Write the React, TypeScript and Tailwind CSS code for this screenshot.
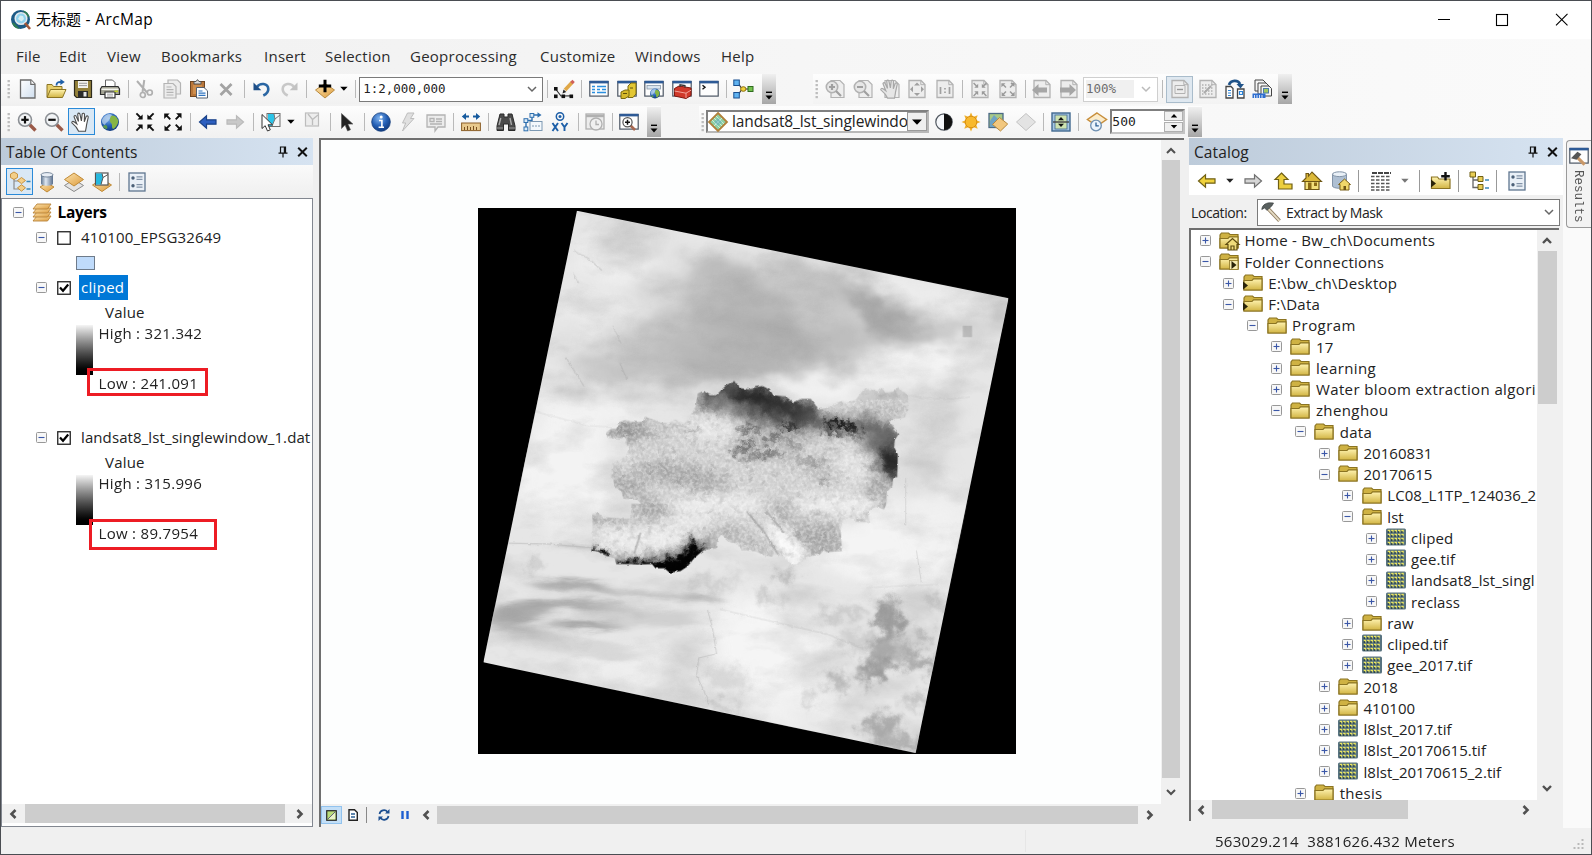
import React from "react";

type Kids = { children?: React.ReactNode };

const Ico = ({ children }: Kids) => (
  <svg viewBox="0 0 20 20" className="h-5 w-5 shrink-0 overflow-visible" fill="none">
    {children}
  </svg>
);

const Btn = ({ children, on }: Kids & { on?: boolean }) => (
  <div className="flex h-[30px] w-[27.4px] shrink-0 items-center justify-center">
    {on ? (
      <div className="flex h-[27px] w-[27px] shrink-0 items-center justify-center border border-[#2a8ad8] bg-[#d9e8f5]">{children}</div>
    ) : (
      children
    )}
  </div>
);

const Sep = () => (
  <div className="flex h-[30px] w-[8px] shrink-0 items-center justify-center">
    <div className="h-[18px] w-px bg-[#b9b9b9]" />
  </div>
);

const Grip = () => (
  <svg viewBox="0 0 4 20" className="h-5 w-1 shrink-0">
    {[1, 5, 9, 13, 17].map((y) => (
      <rect key={y} x="0.5" y={y} width="2.4" height="2.2" fill="#bdbdbd" />
    ))}
  </svg>
);

const Overflow = () => (
  <div className="flex h-[30px] w-[14px] shrink-0 items-end justify-center bg-gradient-to-b from-[#f0f0f0] to-[#a6a6a6] pb-[3px]">
    <svg viewBox="0 0 10 10" className="h-[10px] w-[10px]">
      <path d="M2 1.3h6" stroke="#000" strokeWidth="1.4" />
      <path d="M1.5 4.5h7L5 8.6z" fill="#000" />
    </svg>
  </div>
);

const Drop = ({ c = "#000" }: { c?: string }) => (
  <svg viewBox="0 0 12 6" className="h-[6px] w-[12px] shrink-0">
    <path d="M2.2 0.8h7.4L5.9 4.8z" fill={c} />
  </svg>
);

const Chevron = ({ dir, c = "#505050", s = 2 }: { dir: "l" | "r" | "u" | "d"; c?: string; s?: number }) => {
  const d = {
    l: "M7.5 2L3.5 6l4 4",
    r: "M4.5 2l4 4-4 4",
    u: "M2 8l4-4 4 4",
    d: "M2 4l4 4 4-4",
  }[dir];
  return (
    <svg viewBox="0 0 12 12" className="h-3 w-3 shrink-0" fill="none">
      <path d={d} stroke={c} strokeWidth={s} />
    </svg>
  );
};

const Defs = () => (
  <svg className="absolute h-0 w-0">
    <defs>
      <linearGradient id="gold" x1="0" y1="0" x2="0" y2="1">
        <stop offset="0" stopColor="#fff3b0" />
        <stop offset="1" stopColor="#d2b544" />
      </linearGradient>
      <linearGradient id="tan" x1="0" y1="0" x2="1" y2="1">
        <stop offset="0" stopColor="#fce3ae" />
        <stop offset="1" stopColor="#dd9c3e" />
      </linearGradient>
      <linearGradient id="paper" x1="0" y1="0" x2="1" y2="1">
        <stop offset="0" stopColor="#ffffff" />
        <stop offset="1" stopColor="#cfdeee" />
      </linearGradient>
      <linearGradient id="cyl" x1="0" y1="0" x2="1" y2="0">
        <stop offset="0" stopColor="#5e7590" />
        <stop offset="0.4" stopColor="#dfe8f2" />
        <stop offset="1" stopColor="#5a6f8c" />
      </linearGradient>
      <radialGradient id="blueball" cx="0.4" cy="0.3" r="0.7">
        <stop offset="0" stopColor="#7fb4f0" />
        <stop offset="0.6" stopColor="#245fb5" />
        <stop offset="1" stopColor="#123c80" />
      </radialGradient>
    </defs>
  </svg>
);

/* ---------- icons ---------- */
const NewDoc = () => (
  <Ico>
    <path d="M2.5 1h10.5l4 4v14h-14.5z" fill="url(#paper)" stroke="#6b6b6b" strokeWidth="1.3" />
    <path d="M12.8 1v4.4h4.2" fill="#fff" stroke="#6b6b6b" strokeWidth="1.2" />
  </Ico>
);
const Open = () => (
  <Ico>
    <path d="M1 18V5.500h5l1.500 2H16V18z" fill="#e7cf6c" stroke="#8b7422" />
    <path d="M1 18.500L4.500 10.500h15.500l-3.500 8z" fill="url(#gold)" stroke="#8b7422" />
    <path d="M10.500 6.500c0-3 1.500-3.500 4.500-3.500" stroke="#1d5fa8" strokeWidth="1.800" />
    <path d="M14.400 0l4.400 3-4.400 3z" fill="#1d5fa8" />
  </Ico>
);
const Save = () => (
  <Ico>
    <path d="M1.500 1.500h17v17h-15l-2-2z" fill="#94813a" stroke="#2e2b1d" strokeWidth="1.2" />
    <rect x="5" y="2" width="10" height="7" fill="#f2f2ee" />
    <path d="M6 4.300h8M6 6.600h8" stroke="#9a9a9a" />
    <rect x="5" y="12" width="10" height="6.400" fill="#2b2b2b" />
    <rect x="10.500" y="13" width="3" height="4.500" fill="#e8e8e8" />
  </Ico>
);
const Print = () => (
  <Ico>
    <path d="M5.500 8V1h7l2.500 2.500V8" fill="#fff" stroke="#666" />
    <path d="M2 7.500h16l1.500 2.500v5.500h-19V10z" fill="#a3a394" stroke="#2f2f2f" strokeWidth="1.200" />
    <path d="M1.500 10.300h17" stroke="#f5f5f0" strokeWidth="1.500" />
    <path d="M5 13h10v5.800H5z" fill="#fff" stroke="#333" strokeWidth="1.200" />
    <path d="M7 15.200h6M7 17h6" stroke="#888" strokeWidth="0.800" />
    <rect x="14.500" y="11.500" width="3.500" height="1.600" fill="#c4d32c" />
  </Ico>
);
const Cut = () => (
  <Ico>
    <path d="M3 2L13 13.500M10.300 1L8.500 13" stroke="#b0b0b0" strokeWidth="2" />
    <circle cx="8.800" cy="16" r="2.500" stroke="#b0b0b0" strokeWidth="1.700" />
    <circle cx="15.800" cy="13.500" r="2.500" stroke="#b0b0b0" strokeWidth="1.700" />
  </Ico>
);
const Copy = () => (
  <Ico>
    <path d="M6 1h9.500l3 3v11H6z" fill="#ececec" stroke="#b4b4b4" strokeWidth="1.200" />
    <path d="M2 4.500h9l3 3V19H2z" fill="#ececec" stroke="#b4b4b4" strokeWidth="1.200" />
    <path d="M4.500 8h5M4.500 10.700h7M4.500 13.300h7M4.500 16h7" stroke="#b4b4b4" strokeWidth="1.200" />
  </Ico>
);
const Paste = () => (
  <Ico>
    <rect x="1.500" y="2.500" width="14" height="15" fill="#b8763a" stroke="#6f4520" />
    <path d="M5 5V2.500h2L8.500.6 10 2.500h2V5z" fill="#d8d8d8" stroke="#555" />
    <rect x="4" y="6" width="9" height="9" fill="#cf8f4e" />
    <path d="M7.500 8.500h7.500l3.500 3.300V19H7.500z" fill="#fff" stroke="#55606e" />
    <path d="M9.500 12h4M9.500 14.200h7M9.500 16.400h7" stroke="#2f74c0" strokeWidth="1.200" />
  </Ico>
);
const Del = () => (
  <Ico>
    <path d="M4.500 5l11 11M15.500 5l-11 11" stroke="#a3a3a3" strokeWidth="2.800" />
  </Ico>
);
const Undo = () => (
  <Ico>
    <path d="M5 8c3-4.500 11-4 11.300 2 .1 3-1.800 5-5 6.500" stroke="#2a66a3" strokeWidth="2.600" />
    <path d="M1.500 3.500v7.800h7.800z" fill="#1f4f88" />
  </Ico>
);
const Redo = () => (
  <Ico>
    <path d="M15 8C12 3.500 4 4 3.700 10c-.1 3 1.800 5 5 6.500" stroke="#c8c8c8" strokeWidth="2.600" />
    <path d="M18.500 3.500v7.800h-7.800z" fill="#c2c2c2" />
  </Ico>
);
const AddData = () => (
  <Ico>
    <path d="M10 4.500L19.500 11 10 19 .5 11z" fill="url(#tan)" stroke="#b98a3e" />
    <path d="M10 .8v12.400M3.800 7h12.400" stroke="#000" strokeWidth="3" />
  </Ico>
);
const Editor = () => (
  <Ico>
    <path d="M2 10.500l5 6.500 10-.2" stroke="#333" strokeWidth="1.200" />
    <rect x="0" y="8" width="3.600" height="3.600" fill="#111" />
    <rect x="0" y="15.500" width="3.600" height="3.600" fill="#111" />
    <rect x="7.500" y="15.500" width="3.600" height="3.600" fill="#111" />
    <rect x="15.500" y="15.500" width="3.600" height="3.600" fill="#111" />
    <path d="M11 11L18 3.500" stroke="#e0a848" strokeWidth="3.600" />
    <path d="M17.300 1.800l2.500 2.400" stroke="#d0605a" strokeWidth="3" />
    <path d="M8.500 14.500l1-4 2.800 2.600z" fill="#222" />
  </Ico>
);
const WinFrame = ({ children }: Kids) => (
  <Ico>
    <rect x="0.800" y="2.500" width="18.400" height="14.600" fill="#fdfdfd" stroke="#4b5563" strokeWidth="1.200" />
    <rect x="0.500" y="1.800" width="19" height="2.600" fill="#2d5a96" />
    {children}
  </Ico>
);
const WToc = () => (
  <WinFrame>
    <path d="M3 7.500h3M3 10.500h3M3 13.500h3M8 7.500h9M8 10.500h3M8 13.500h9M13 10.500h4" stroke="#2a8fe0" strokeWidth="1.500" />
  </WinFrame>
);
const WCat = () => (
  <WinFrame>
    <path d="M11 7l3-3h5v11l-3 3.500h-5z" fill="#e3c733" stroke="#7b6a12" />
    <path d="M4 13l4-2h4v6l-4 2.500H4z" fill="#d6b92b" stroke="#7b6a12" />
    <path d="M6 14.500h4M13 9h3" stroke="#5e500a" />
  </WinFrame>
);
const Globe = ({ x = 10, y = 10, r = 9 }: { x?: number; y?: number; r?: number }) => (
  <g transform={`translate(${x} ${y}) scale(${r / 9})`}>
    <circle r="9" fill="url(#blueball)" />
    <path d="M-7-4C-4-8 0-9 2-7 1-4 0-4-1-2-2 0-4 0-5 3-8 2-9-1-7-4z" fill="#c3d8ee" opacity="0.700" />
    <path d="M1-6C4-8 8-4 8.300-1 8 2 6 6 3 7 1 5 3 3 1 1-1-1 0-4 1-6z" fill="#86b544" />
    <path d="M-5 3c2 0 3 2 2 4-2 0-4-1-4-3z" fill="#5a9850" />
  </g>
);
const WSearch = () => (
  <WinFrame>
    <rect x="3" y="6.500" width="13.500" height="3.500" fill="#dbe6f0" stroke="#8797a8" strokeWidth="0.800" />
    <Globe x={11} y={14.500} r={5} />
  </WinFrame>
);
const WBox = () => (
  <WinFrame>
    <path d="M2.500 9.500L7 7l12 2v7.500L14 19.500 2.500 17z" fill="#d0392b" stroke="#80180f" />
    <path d="M2.500 12L14 14.200l5-3M14 14v5" stroke="#f3a39a" />
    <path d="M8 8V5.800l5 .8V8.500" stroke="#333" strokeWidth="1.200" />
  </WinFrame>
);
const WPy = () => (
  <WinFrame>
    <path d="M3.500 6.200L6 8.200l-2.500 2" stroke="#111" strokeWidth="1.400" />
  </WinFrame>
);
const Model = () => (
  <Ico>
    <path d="M5 4l4 6M5 16l4-6M9 10h8" stroke="#333" strokeWidth="1.200" />
    <rect x="0.800" y="1" width="5.500" height="5.500" fill="#5fb2f0" stroke="#184f90" />
    <rect x="0.800" y="13.500" width="5.500" height="5.500" fill="#5fb2f0" stroke="#184f90" />
    <ellipse cx="10.300" cy="10" rx="2.700" ry="2.300" fill="#f2d23a" stroke="#8a6d10" />
    <rect x="15" y="7.500" width="5" height="5" fill="#74c24f" stroke="#2f6b1e" />
  </Ico>
);
const Lens = ({ plus }: { plus?: boolean }) => (
  <Ico>
    <path d="M12 12l6.500 6.500" stroke="#9b5a48" strokeWidth="3.400" />
    <circle cx="8" cy="7.800" r="6.500" fill="#f2f4f6" stroke="#8b8f94" strokeWidth="1.600" />
    <path d="M4.300 7.800h7.400" stroke="#111" strokeWidth="2.200" />
    {plus && <path d="M8 4.100v7.400" stroke="#111" strokeWidth="2.200" />}
  </Ico>
);
const handD = "M7.600 19.200C6 15 3.500 13 .8 10.800c-.3-1.600 1.400-1.700 2.600-.8l2.400 1.800L3 4.700c.2-1.500 1.700-1.500 2.200-.3l2.300 5L6.700 2.200c.5-1.500 2-1.300 2.300.1l1.400 6.600.8-7c.9-1.200 2.200-.7 2.300.6l-.2 7.200 1.900-5.300c1-1 2.200-.3 2 1l-1.700 7.800c-.2 2.200-.7 3.600-1 6z";
const Hand = () => (
  <Ico>
    <path d={handD} fill="#fff" stroke="#4d4d4d" strokeWidth="1.100" />
  </Ico>
);
const Arrows = ({ out, c = "#111" }: { out?: boolean; c?: string }) => (
  <g>
    {[0, 90, 180, 270].map((a) => (
      <g key={a} transform={`rotate(${a} 10 10)`}>
        {out ? (
          <g>
            <path d="M1.200 1.500h5.400L1.200 6.900z" fill={c} />
            <path d="M3 3l4.300 4.300" stroke={c} strokeWidth="1.900" />
          </g>
        ) : (
          <g>
            <path d="M7.600 7.600H2.400L7.600 2.400z" fill={c} />
            <path d="M6 6L1.400 1.400" stroke={c} strokeWidth="1.900" />
          </g>
        )}
      </g>
    ))}
  </g>
);
const ArrowLR = ({ right, fill, stroke }: { right?: boolean; fill: string; stroke: string }) => (
  <Ico>
    <path
      d="M1.500 10L8.500 3.800v4H18v4.400H8.500v4z"
      fill={fill}
      stroke={stroke}
      strokeWidth="1.200"
      transform={right ? "translate(20 0) scale(-1 1)" : undefined}
    />
  </Ico>
);
const SelFeat = () => (
  <Ico>
    <rect x="6" y="1.500" width="13" height="13" fill="#f5f5f5" stroke="#6e6e6e" />
    <path d="M7 2h6l1 5-3 7H7z" fill="#2cc4e8" />
    <path d="M13 2l1 5 5-4M14 7l-3 7" stroke="#777" />
    <path d="M1 2.500v14l3.200-2.800L6.500 19l2.800-1.200-2.300-5h4.500z" fill="#fff" stroke="#333" />
  </Ico>
);
const ClearSel = () => (
  <Ico>
    <rect x="2.500" y="1" width="13" height="13" fill="#ededed" stroke="#bdbdbd" strokeWidth="1.200" />
    <path d="M5 2l4.500 5.500L15 3M9.500 7.500V13" stroke="#bdbdbd" strokeWidth="1.300" />
  </Ico>
);
const Cursor = () => (
  <Ico>
    <path d="M4.500 1.500v15l3.600-3.400 2.500 5.900 2.900-1.300-2.600-5.600h5z" fill="#222" stroke="#555" strokeWidth="0.600" />
  </Ico>
);
const Info = () => (
  <Ico>
    <circle cx="10" cy="10" r="9.300" fill="url(#blueball)" stroke="#16407f" strokeWidth="0.800" />
    <circle cx="10.200" cy="5" r="1.500" fill="#fff" />
    <path d="M8 8.500h2.900v6.500M7.600 15.300h5.400" stroke="#fff" strokeWidth="1.600" />
  </Ico>
);
const Bolt = () => (
  <Ico>
    <path d="M9.500 1h6.500l-3.500 5.500H16L4.500 19l3.200-8H4.500z" fill="#e0e0e0" stroke="#bdbdbd" />
  </Ico>
);
const Popup = () => (
  <Ico>
    <path d="M1 3h18v12h-7l-3 4v-4H1z" fill="#ececec" stroke="#b3b3b3" strokeWidth="1.300" />
    <path d="M4 6.500h4v3H4zM10 7h6M10 9.500h6M4 12h12" stroke="#b3b3b3" strokeWidth="1.300" />
  </Ico>
);
const Measure = () => (
  <Ico>
    <path d="M3 4.500h5M12 4.500h5" stroke="#165a9e" strokeWidth="1.800" />
    <path d="M5 1v7L.8 4.500zM15 1v7l4.200-3.500z" fill="#165a9e" />
    <rect x="0.600" y="11" width="18.800" height="7.600" fill="#e8c98d" stroke="#8b5f28" />
    <path d="M3.500 18v-3M6.500 18v-4M9.500 18v-3M12.500 18v-4M15.500 18v-3" stroke="#7a5020" />
  </Ico>
);
const Binoc = () => (
  <Ico>
    <path d="M4 2h4v3h4V2h4l3 12v4.500h-6.500V12h-5v6.500H1V14z" fill="#4a4a4a" stroke="#2a2a2a" />
    <path d="M4.800 6L3 13M14 6l1.500 7" stroke="#aaa" strokeWidth="1.400" />
    <path d="M1 16h6M13 16h6" stroke="#999" strokeWidth="1.200" />
  </Ico>
);
const Route = () => (
  <Ico>
    <path d="M3 16.500V8.500h6V3h8" stroke="#2e6fae" strokeWidth="1.400" />
    <path d="M14.500.2L18.500 3l-4 2.800z" fill="#2e6fae" />
    <rect x="1" y="6.700" width="3.800" height="3.800" fill="#dcecf8" stroke="#2e6fae" />
    <rect x="1" y="15" width="3.800" height="3.800" fill="#dcecf8" stroke="#2e6fae" />
    <rect x="7" y="1.500" width="3.800" height="3.800" fill="#dcecf8" stroke="#2e6fae" />
    <rect x="7" y="9.500" width="12" height="9" fill="#f3f8fc" stroke="#7c98b2" />
    <path d="M9 14h8" stroke="#7c98b2" strokeDasharray="2 1" />
  </Ico>
);
const GoXY = () => (
  <Ico>
    <circle cx="10" cy="4.500" r="3.700" stroke="#1d5fa8" strokeWidth="1.500" />
    <circle cx="10" cy="4.500" r="1.500" fill="#1d5fa8" />
    <path d="M2.500 11l5.500 8M8 11l-5.500 8M11.500 11l3 4.200L17.500 11M14.500 15v4" stroke="#1d5fa8" strokeWidth="1.900" />
  </Ico>
);
const TimeS = () => (
  <Ico>
    <rect x="1" y="2" width="18" height="15" fill="#ececec" stroke="#b0b0b0" strokeWidth="1.300" />
    <path d="M1 4h18" stroke="#b0b0b0" strokeWidth="2.400" />
    <circle cx="11" cy="12" r="6" fill="#f0f0f0" stroke="#b0b0b0" strokeWidth="1.300" />
    <path d="M11 8.500v4h3" stroke="#b0b0b0" strokeWidth="1.300" />
  </Ico>
);
const Viewer = () => (
  <WinFrame>
    <path d="M11 13l5 5" stroke="#a8674f" strokeWidth="2.600" />
    <circle cx="8.500" cy="10.300" r="4.600" fill="#fff" stroke="#555" strokeWidth="1.200" />
    <path d="M6 10.300h5M8.500 7.800v5" stroke="#111" strokeWidth="1.500" />
  </WinFrame>
);
const G = "#b2b2b2";
const GPage = ({ children }: Kids) => (
  <Ico>
    <path d="M2 1.500h12l4 4V18.500H2z" fill="#ededed" stroke={G} strokeWidth="1.300" />
    <path d="M13.800 1.500v4.200H18" stroke={G} />
    {children}
  </Ico>
);
const GLens = ({ plus }: { plus?: boolean }) => (
  <Ico>
    <path d="M6 1.500h9l4 4V18.500H6z" fill="#eeeeee" stroke={G} strokeWidth="1.200" />
    <circle cx="7" cy="8" r="5.700" fill="#e6e6e6" stroke={G} strokeWidth="1.600" />
    <path d="M4 8h6M11 12l5 5" stroke="#a0a0a0" strokeWidth="2.200" />
    {plus && <path d="M7 5v6" stroke="#a0a0a0" strokeWidth="2.200" />}
  </Ico>
);
const GHand = () => (
  <Ico>
    <path d="M5 1.500h10l4 4V18.500H5z" fill="#eeeeee" stroke={G} strokeWidth="1.200" />
    <path d={handD} fill="#e6e6e6" stroke="#a8a8a8" strokeWidth="1.200" />
  </Ico>
);
const Swap = () => (
  <Ico>
    <path d="M4 6C6 .8 13 .8 15 5" stroke="#1f5288" strokeWidth="2.800" />
    <path d="M11.500 5h7.500l-3.500 4.500z" fill="#1f5288" />
    <path d="M1 7.500h5l2 2V19H1zM12.500 10h6.500v9h-6.500z" fill="#fff" stroke="#444" strokeWidth="1.300" />
    <path d="M3 11.500h3M3 14h3M3 16.500h3M14.500 12.500v3h3v-3z" stroke="#2b84d8" strokeWidth="1.200" />
  </Ico>
);
const Pages = () => (
  <Ico>
    <path d="M3 1h8l3 3v8H3z" fill="#f5f5f5" stroke="#444" />
    <path d="M6 4h8l3 3v8H6z" fill="#f5f5f5" stroke="#444" />
    <path d="M9 7h8l2.500 2.500V17H9z" fill="#f5f5f5" stroke="#444" />
    <rect x="11.500" y="9.500" width="5" height="4.500" fill="#a3c95e" stroke="#4c7aa6" />
    <rect x="0.500" y="14.500" width="13" height="4.500" fill="#2f6fd0" />
    <path d="M2.500 16v3M5 16v3M7.500 16v3M10 16v3" stroke="#fff" strokeWidth="0.800" />
  </Ico>
);
const Contrast = () => (
  <Ico>
    <circle cx="10" cy="10" r="8.200" fill="#f5f7fa" stroke="#50575f" strokeWidth="1.200" />
    <path d="M10 1.800a8.200 8.200 0 010 16.400z" fill="#111" />
  </Ico>
);
const Sun = () => (
  <Ico>
    {[0, 45, 90, 135].map((a) => (
      <path key={a} d="M10 .5l1.800 4v11L10 19.500l-1.800-4v-11z" fill="#efb02c" transform={`rotate(${a} 10 10)`} />
    ))}
    <circle cx="10" cy="10" r="5.800" fill="#f8b92d" stroke="#d88f13" />
  </Ico>
);
const Transp = () => (
  <Ico>
    <rect x="1" y="1.500" width="14" height="14" fill="#a9c987" stroke="#4b6a86" strokeWidth="1.300" />
    <path d="M2 9l4-6 5 5-3 7H2z" fill="#6fa3c4" />
    <path d="M11.500 5.500l8.200 6.500-7.200 7-8-6.500z" fill="#f2c77e" stroke="#b98a3e" />
  </Ico>
);
const GDia = () => (
  <Ico>
    <path d="M10 1.500l9.500 8.500-9.500 8.500L.5 10z" fill="#e3e3e3" stroke="#c3c3c3" />
  </Ico>
);
const SwipeI = () => (
  <Ico>
    <rect x="1" y="1" width="18" height="18" fill="#a7c7e4" stroke="#40688f" strokeWidth="1.400" />
    <rect x="4" y="3" width="12" height="14" fill="#cde2b0" stroke="#40688f" strokeWidth="0.800" />
    <path d="M2 10h16" stroke="#444" strokeWidth="1.400" />
    <path d="M7 8.200h6L10 4.900zM7 11.800h6L10 15.100z" fill="#111" />
  </Ico>
);
const Flick = () => (
  <Ico>
    <path d="M10 1l9.500 6.500L10 14 .5 7.500z" fill="#fbeccb" stroke="#c88f3c" strokeWidth="1.500" />
    <circle cx="9" cy="13.500" r="5.300" fill="#eaf3fb" stroke="#6e8fb0" strokeWidth="1.300" />
    <path d="M9 10.500v3.300h2.800" stroke="#2b5f93" strokeWidth="1.300" />
  </Ico>
);
const RasterDia = () => (
  <Ico>
    <path d="M10 1l9 9-9 9-9-9z" fill="#8ed0a4" stroke="#b0803a" strokeWidth="1.800" />
    <path d="M6 6l8 8M14 6l-8 8M8 4l8 8M4 8l8 8" stroke="#dff2e4" strokeWidth="0.800" />
    <path d="M10 6l4 4-4 4-4-4z" fill="#5aa7c0" opacity="0.500" />
  </Ico>
);
const TocDraw = () => (
  <Ico>
    <path d="M4 7v10h7M4 9h7" stroke="#8b8b8b" strokeWidth="1.200" />
    <path d="M4 0l3.500 2v3.500L4 7.500.5 5.500V2zM11.500 5.500l4 3-4 3.200-4-3.200zM11.500 12.800l4 3-4 3.400-4-3.400z" fill="#f3cf88" stroke="#c28a33" strokeWidth="0.900" />
    <path d="M16.500 9.500h4M16.500 17h4" stroke="#3a87b8" strokeWidth="1.700" />
  </Ico>
);
const TocSrc = () => (
  <Ico>
    <path d="M10 11l7 4-7 5-7-5z" fill="url(#tan)" stroke="#c08a35" />
    <path d="M4 2.500v9c0 3 12 3 12 0v-9z" fill="url(#cyl)" />
    <ellipse cx="10" cy="2.800" rx="6" ry="2.200" fill="#e8eef5" stroke="#5f7288" strokeWidth="0.800" />
  </Ico>
);
const TocVis = () => (
  <Ico>
    <path d="M10 7.500l9.500 6L10 19.500l-9.500-6z" fill="#e4e4e4" stroke="#8a8a8a" />
    <path d="M10 1l9.500 6.500L10 14 .5 7.500z" fill="url(#tan)" stroke="#c08a35" />
  </Ico>
);
const TocSel = () => (
  <Ico>
    <path d="M10 7l9.500 6L10 19.500.5 13z" fill="url(#tan)" stroke="#c08a35" />
    <rect x="3.500" y="1" width="12.500" height="12" fill="#fff" stroke="#555" strokeWidth="1.200" />
    <path d="M4 1.500h6l1 4-2 7H4z" fill="#26b8de" />
    <path d="M10 1.500l1 4 5-3M11 5.500l-2 7" stroke="#555" />
  </Ico>
);
const OptList = () => (
  <Ico>
    <rect x="2" y="1" width="16" height="18" fill="#eaf0f7" stroke="#5f7690" strokeWidth="1.300" />
    <circle cx="6" cy="6" r="1.700" fill="#4c6078" />
    <circle cx="6" cy="13.800" r="1.700" fill="#4c6078" />
    <path d="M9.500 4.800h6M9.500 7.300h6M9.500 12.600h6M9.500 15.200h6" stroke="#8393a8" strokeWidth="1.200" />
  </Ico>
);
const Hammer = () => (
  <Ico>
    <path d="M7 6.500l11.500 12.300" stroke="#8d7b60" strokeWidth="3.600" />
    <path d="M7 6.500l11.500 12.300" stroke="#e6dcc4" strokeWidth="1.900" />
    <path d="M.8 7.500C1 4 4 1 8.500.8L12.500 1 10.800 4 6 8.300 3.500 6z" fill="#59605f" stroke="#3a3f3f" strokeWidth="0.700" />
  </Ico>
);

const Folder = ({ mark }: { mark?: "home" | "conn" | "left" }) => (
  <Ico>
    <path d="M1 17V4l1.500-2h7L11 3.500h8V17z" fill="#cfb243" stroke="#8b7422" strokeWidth="1.200" />
    <path d="M1 17V7.500h8l1.500-1.600H19V17z" fill="url(#gold)" stroke="#8b7422" strokeWidth="1.200" />
    {mark === "home" && <path d="M7 13.500l6.500-6 6.500 6h-2v5.500H9v-5.500zM12 19v-4h3v4" fill="#f0dc7b" stroke="#5f4d10" strokeWidth="1.200" />}
    {mark === "conn" && (
      <g>
        <rect x="10.500" y="8.500" width="8.500" height="9" fill="#f7ecb0" stroke="#8b7422" strokeWidth="0.800" />
        <path d="M12.500 9l5 4-5 4z" fill="#2a2409" />
      </g>
    )}
    {mark === "left" && <path d="M0 8.500l5 4-5 4z" fill="#2a2409" />}
  </Ico>
);
const Raster = () => (
  <Ico>
    <rect x="0" y="0.500" width="20" height="17" rx="1.500" fill="#587380" />
    {[1.800, 5.800, 9.800, 13.800].map((y) =>
      [1.800, 5.200, 8.600, 12, 15.400].map((x) => (
        <g key={`${x}-${y}`}>
          <rect x={x} y={y} width="2.400" height="1.500" fill="#ece65e" />
          <rect x={x + 0.900} y={y + 1.500} width="1.500" height="0.900" fill="#ece65e" />
          <rect x={x - 0.200} y={y + 1.500} width="1.400" height="1.500" fill="#1f3640" />
        </g>
      ))
    )}
  </Ico>
);
const Expander = ({ plus }: { plus?: boolean }) => (
  <svg viewBox="0 0 11 11" className="h-[11px] w-[11px] shrink-0">
    <rect x="0.500" y="0.500" width="10" height="10" rx="1" fill="#f7f7f7" stroke="#989898" />
    <path d="M2.500 5.500h6" stroke="#3b57a8" strokeWidth="1.100" />
    {plus && <path d="M5.500 2.500v6" stroke="#3b57a8" strokeWidth="1.100" />}
  </svg>
);
const Pin = () => (
  <svg viewBox="0 0 10 12" className="h-3 w-[10px] shrink-0" fill="none">
    <path d="M2.500 1h5v6h-5zM.5 7.200h9M5 7v4.500" stroke="#111" strokeWidth="1.200" />
    <path d="M6.700 1v6" stroke="#111" strokeWidth="1.800" />
  </svg>
);
const CloseX = () => (
  <svg viewBox="0 0 11 10" className="h-[10px] w-[11px] shrink-0">
    <path d="M1.200.8l8.600 8.400M9.800.8L1.200 9.200" stroke="#111" strokeWidth="2" />
  </svg>
);

const Check = ({ on }: { on?: boolean }) => (
  <svg viewBox="0 0 14 14" className="h-[14px] w-[14px] shrink-0">
    <rect x="0.750" y="0.750" width="12.500" height="12.500" fill="#fff" stroke="#222" strokeWidth="1.300" />
    {on && <path d="M3 6.500l3 3.300L11.200 3.500" fill="none" stroke="#000" strokeWidth="2.200" />}
  </svg>
);

/* ---------- satellite scene ---------- */
const REGION =
  "638,540 655,533 672,545 690,545 705,530 720,515 740,507 752,515 755,525 780,528 800,522 820,519 840,530 850,545 885,548 905,565 930,555 955,555 970,575 975,585 1010,578 1030,568 1045,560 1050,568 1080,558 1090,545 1105,528 1125,528 1145,535 1150,525 1165,537 1185,535 1200,522 1210,533 1228,545 1226,580 1218,608 1185,612 1178,620 1190,640 1200,655 1190,670 1188,690 1198,710 1197,775 1185,775 1183,800 1168,815 1166,850 1160,865 1140,858 1130,860 1115,870 1118,900 1080,900 1075,890 1045,895 1038,920 1042,982 1000,985 990,980 980,992 945,998 920,1020 900,1020 880,1000 860,990 845,998 820,993 800,982 760,980 748,960 730,958 705,935 695,945 690,975 660,978 648,985 630,1000 610,1025 590,1038 560,1043 545,1030 520,1030 510,1018 470,1020 440,1018 410,1018 405,1000 380,995 365,985 340,980 345,930 343,880 360,875 370,887 450,893 455,850 480,850 470,838 430,835 425,815 405,800 402,780 395,775 400,735 420,730 430,718 455,718 440,710 445,690 435,680 440,665 385,665 382,650 395,640 410,640 420,620 435,615 450,620 485,620 490,605 510,612 535,622 560,622 575,613 600,625 612,610 632,580";

type Blob = [number, number, number, number, number, string, number];
const UPPER: Blob[] = [
  [560, 470, 280, 60, 0, "#b2b2b2", 0.7],
  [800, 390, 330, 85, 6, "#a6a6a6", 0.65],
  [760, 300, 210, 90, 25, "#ababab", 0.65],
  [900, 250, 180, 60, 15, "#b2b2b2", 0.6],
  [780, 470, 200, 32, -5, "#acacac", 0.6],
  [1180, 370, 260, 30, 0, "#b4b4b4", 0.5],
  [1090, 270, 60, 38, 50, "#868686", 0.75],
  [1150, 330, 60, 42, 50, "#868686", 0.7],
  [1240, 345, 80, 24, 22, "#8e8e8e", 0.75],
  [1360, 365, 90, 20, 0, "#a8a8a8", 0.7],
  [720, 190, 110, 22, 14, "#a8a8a8", 0.7],
  [1000, 210, 120, 22, 14, "#b0b0b0", 0.7],
  [470, 110, 70, 14, 8, "#aaaaaa", 0.7],
  [530, 242, 60, 12, 8, "#9c9c9c", 0.7],
  [1490, 310, 30, 50, 0, "#aaaaaa", 0.8],
  [430, 390, 50, 60, -30, "#c4c4c4", 0.5],
  [280, 450, 14, 60, -30, "#b0b0b0", 0.6],
  [1320, 620, 16, 110, 3, "#b8b8b8", 0.8],
  [1250, 750, 80, 36, 0, "#cecece", 0.8],
];
const LOWER: Blob[] = [
  [290, 1078, 110, 13, 2, "#a0a0a0", 0.85],
  [290, 1130, 150, 14, 3, "#a2a2a2", 0.8],
  [140, 1150, 90, 26, -5, "#9a9a9a", 0.8],
  [320, 1190, 110, 11, 3, "#989898", 0.85],
  [130, 1200, 120, 18, 15, "#ababab", 0.75],
  [430, 1100, 220, 10, 4, "#b8b8b8", 0.7],
  [480, 1165, 180, 26, 4, "#c6c6c6", 0.7],
  [300, 1250, 200, 26, 8, "#d0d0d0", 0.7],
  [650, 1112, 50, 9, 5, "#a4a4a4", 0.8],
  [290, 970, 60, 6, 2, "#b4b4b4", 0.8],
];
const PATCHES: Blob[] = [
  [1175, 1175, 34, 60, -8, "#8a8a8a", 0.8],
  [1155, 1270, 44, 60, 10, "#9a9a9a", 0.75],
  [1130, 1320, 50, 24, -15, "#8c8c8c", 0.75],
  [1225, 1265, 20, 34, 10, "#9a9a9a", 0.7],
  [1275, 1300, 50, 20, 15, "#929292", 0.75],
  [1275, 1220, 30, 10, 35, "#909090", 0.8],
  [1040, 1160, 70, 16, 0, "#b8b8b8", 0.7],
  [1080, 1230, 50, 30, 0, "#c0c0c0", 0.6],
  [1030, 1350, 34, 26, 30, "#ababab", 0.8],
  [1150, 1470, 60, 26, 0, "#999999", 0.8],
  [1200, 1520, 70, 20, 10, "#9e9e9e", 0.75],
  [1250, 1400, 40, 16, -20, "#b0b0b0", 0.7],
  [885, 1045, 22, 13, 10, "#9a9a9a", 0.85],
  [822, 1110, 16, 9, 10, "#949494", 0.85],
  [858, 1124, 12, 8, 10, "#a0a0a0", 0.85],
  [745, 1045, 9, 9, 0, "#b0b0b0", 0.85],
  [945, 1395, 16, 7, 0, "#8f8f8f", 0.8],
  [1310, 1125, 10, 12, 0, "#888888", 0.8],
  [180, 1025, 14, 16, 0, "#b0b0b0", 0.8],
  [680, 1070, 70, 16, 10, "#c4c4c4", 0.8],
  [710, 1420, 40, 12, 10, "#b0b0b0", 0.7],
  [720, 1340, 70, 26, 15, "#d2d2d2", 0.8],
];
const LIGHTS: Blob[] = [
  [400, 180, 130, 36, 15, "#f4f4f4", 0.8],
  [340, 300, 80, 50, 15, "#eeeeee", 0.6],
  [1270, 255, 130, 20, 14, "#f6f6f6", 0.8],
  [1160, 460, 280, 46, -8, "#fafafa", 0.9],
  [960, 520, 120, 28, 0, "#fafafa", 0.8],
  [330, 590, 150, 60, 0, "#f4f4f4", 0.8],
  [260, 760, 130, 160, 0, "#f4f4f4", 0.9],
  [1180, 980, 200, 110, 0, "#f5f5f5", 0.9],
  [1300, 900, 90, 120, 0, "#f1f1f1", 0.8],
  [820, 1230, 160, 130, 10, "#f5f5f5", 0.95],
  [900, 1400, 130, 60, 10, "#f3f3f3", 0.9],
  [460, 1320, 200, 40, 12, "#f1f1f1", 0.9],
  [1000, 300, 50, 30, 30, "#dcdcdc", 0.7],
  [1020, 360, 40, 20, 30, "#dddddd", 0.6],
];
const Blobs = ({ items }: { items: Blob[] }) => (
  <>
    {items.map(([cx, cy, rx, ry, a, fill, o], i) => (
      <ellipse key={i} cx={cx} cy={cy} rx={rx} ry={ry} fill={fill} opacity={o} transform={`rotate(${a} ${cx} ${cy})`} />
    ))}
  </>
);
const MID: Blob[] = [
  [440, 640, 60, 34, 10, "#8c8c8c", 0.9],
  [510, 655, 50, 20, 0, "#a8a8a8", 0.7],
  [600, 770, 130, 34, 12, "#a0a0a0", 0.85],
  [440, 800, 60, 40, 0, "#9c9c9c", 0.75],
  [510, 865, 45, 26, 0, "#989898", 0.85],
  [400, 885, 70, 12, 0, "#848484", 0.85],
  [980, 950, 70, 50, 20, "#a0a0a0", 0.85],
  [880, 880, 70, 22, 40, "#a4a4a4", 0.8],
  [1145, 820, 36, 60, 0, "#9a9a9a", 0.8],
  [990, 760, 50, 30, 10, "#b0b0b0", 0.7],
  [720, 940, 60, 20, 10, "#a0a0a0", 0.8],
  [820, 970, 60, 20, 10, "#aaaaaa", 0.7],
  [1170, 580, 60, 26, 0, "#b8b8b8", 0.8],
  [830, 680, 120, 50, 0, "#b0b0b0", 0.7],
];
const DARK: Blob[] = [
  [730, 575, 100, 26, 10, "#747474", 0.85],
  [870, 615, 130, 26, 10, "#5c5c5c", 0.85],
  [750, 530, 110, 24, 8, "#303030", 0.85],
  [830, 555, 100, 34, 14, "#202020", 0.9],
  [910, 590, 80, 30, 14, "#303030", 0.85],
  [660, 548, 30, 14, 0, "#303030", 0.85],
  [950, 575, 30, 20, 10, "#444444", 0.8],
  [1030, 625, 90, 22, 8, "#606060", 0.75],
  [1140, 640, 80, 26, 20, "#4a4a4a", 0.8],
  [1150, 690, 60, 28, 5, "#5a5a5a", 0.7],
  [1185, 730, 44, 46, 0, "#161616", 0.9],
];
const CLUMPS: Blob[] = [
  [1040, 628, 50, 11, 12, "#0c0c0c", 0.9],
  [1020, 650, 34, 7, 20, "#222222", 0.75],
  [1080, 650, 28, 8, 30, "#333333", 0.7],
  [890, 633, 28, 7, 10, "#141414", 0.85],
  [780, 640, 36, 8, 0, "#5a5a5a", 0.75],
  [850, 665, 34, 8, -20, "#505050", 0.7],
  [770, 690, 38, 9, -25, "#505050", 0.75],
  [830, 710, 50, 9, 0, "#5a5a5a", 0.7],
  [780, 725, 26, 6, 0, "#707070", 0.75],
  [900, 680, 30, 8, 40, "#7a7a7a", 0.7],
  [950, 732, 50, 8, 5, "#8a8a8a", 0.7],
  [620, 645, 20, 7, 0, "#8a8a8a", 0.7],
  [990, 785, 12, 10, 0, "#8a8a8a", 0.7],
];

const Scene = () => (
  <svg viewBox="23 20 1506 1531" preserveAspectRatio="none" className="block h-[546px] w-[538px] shrink-0">
    <defs>
      <clipPath id="scene">
        <polygon points="300,28 1508,273 1248,1548 38,1294" />
      </clipPath>
      <clipPath id="region">
        <polygon points={REGION} />
      </clipPath>
      <filter id="soft" x="-10%" y="-10%" width="120%" height="120%" colorInterpolationFilters="sRGB">
        <feGaussianBlur stdDeviation="30" result="b" />
        <feTurbulence type="fractalNoise" baseFrequency="0.009 0.014" numOctaves="5" seed="4" result="n" />
        <feDisplacementMap in="b" in2="n" scale="100" xChannelSelector="R" yChannelSelector="G" />
        <feGaussianBlur stdDeviation="3" />
      </filter>
      <filter id="streak" x="-10%" y="-10%" width="120%" height="120%" colorInterpolationFilters="sRGB">
        <feGaussianBlur stdDeviation="28 8" result="b" />
        <feTurbulence type="fractalNoise" baseFrequency="0.008 0.030" numOctaves="4" seed="9" result="n" />
        <feDisplacementMap in="b" in2="n" scale="34" xChannelSelector="R" yChannelSelector="G" />
        <feGaussianBlur stdDeviation="3 1" />
      </filter>
      <filter id="patch" x="-10%" y="-10%" width="120%" height="120%" colorInterpolationFilters="sRGB">
        <feGaussianBlur stdDeviation="13" result="b" />
        <feTurbulence type="fractalNoise" baseFrequency="0.030" numOctaves="5" seed="5" result="n" />
        <feDisplacementMap in="b" in2="n" scale="75" xChannelSelector="R" yChannelSelector="G" />
        <feGaussianBlur stdDeviation="1.500" />
      </filter>
      <filter id="tone" x="-10%" y="-10%" width="120%" height="120%" colorInterpolationFilters="sRGB">
        <feGaussianBlur stdDeviation="17" result="b" />
        <feTurbulence type="fractalNoise" baseFrequency="0.030" numOctaves="4" seed="11" result="n" />
        <feDisplacementMap in="b" in2="n" scale="40" xChannelSelector="R" yChannelSelector="G" />
      </filter>
      <filter id="clump" x="-10%" y="-10%" width="120%" height="120%" colorInterpolationFilters="sRGB">
        <feGaussianBlur stdDeviation="6" result="b" />
        <feTurbulence type="fractalNoise" baseFrequency="0.060" numOctaves="4" seed="3" result="n" />
        <feDisplacementMap in="b" in2="n" scale="50" xChannelSelector="R" yChannelSelector="G" />
        <feGaussianBlur stdDeviation="1.500" />
      </filter>
      <filter id="rough" x="-5%" y="-5%" width="110%" height="110%" colorInterpolationFilters="sRGB">
        <feTurbulence type="fractalNoise" baseFrequency="0.080" numOctaves="2" seed="2" result="n" />
        <feDisplacementMap in="SourceGraphic" in2="n" scale="8" xChannelSelector="R" yChannelSelector="G" />
      </filter>
      <filter id="speckle" x="0" y="0" width="100%" height="100%" colorInterpolationFilters="sRGB">
        <feTurbulence type="fractalNoise" baseFrequency="0.120" numOctaves="2" seed="7" />
        <feColorMatrix values="0 0 0 0 1  0 0 0 0 1  0 0 0 0 1  3.500 0 0 0 -1.400" />
      </filter>
      <filter id="mottle" x="0" y="0" width="100%" height="100%" colorInterpolationFilters="sRGB">
        <feTurbulence type="fractalNoise" baseFrequency="0.045" numOctaves="4" seed="21" />
        <feColorMatrix values="0 0 0 0 0.500  0 0 0 0 0.500  0 0 0 0 0.500  0 3.200 0 0 -1.600" />
      </filter>
      <filter id="haze" x="0" y="0" width="100%" height="100%" colorInterpolationFilters="sRGB">
        <feTurbulence type="fractalNoise" baseFrequency="0.006 0.012" numOctaves="6" seed="13" />
        <feColorMatrix values="0 0 0 0 0.550  0 0 0 0 0.550  0 0 0 0 0.550  2.200 0 0 0 -0.950" />
      </filter>
    </defs>
    <rect x="23" y="20" width="1506" height="1531" fill="#000" />
    <g clipPath="url(#scene)">
      <rect x="23" y="20" width="1506" height="1531" fill="#e6e6e6" />
      <g filter="url(#soft)">
        <Blobs items={LIGHTS} />
        <Blobs items={UPPER} />
      </g>
      <g filter="url(#streak)">
        <Blobs items={LOWER} />
      </g>
      <g filter="url(#patch)">
        <Blobs items={PATCHES} />
      </g>
      <rect x="1380" y="350" width="26" height="32" fill="#989898" opacity="0.500" />
      <rect x="23" y="20" width="1506" height="1531" filter="url(#haze)" opacity="0.260" />
      <g fill="none" stroke="#9a9a9a" strokeWidth="3" opacity="0.350" filter="url(#rough)">
        <path d="M105 960l110 2 140 12M665 1145l14 50 12 75-50 12-6 50 20 40 14 40" />
        <path d="M700 1145l170 40 130 30 100 40M1250 980l14 90M400 350l24 50M1220 780v130" opacity="0.700" />
        <path d="M180 590l150 40 70 5M1230 545l60 10 60 0 50-5M1110 1085l90-5 110-4" opacity="0.500" />
        <path d="M290 140l40 20 40 35M290 205l15 25M420 455l20 45M270 440l50 80" />
      </g>
    </g>
    <g filter="url(#rough)">
      <g clipPath="url(#region)">
        <rect x="300" y="480" width="960" height="600" fill="#cfcfcf" />
        <g filter="url(#tone)">
          <Blobs items={MID} />
          <path d="M830 900l60 20 40 50 0 50-30 20-50-80z" fill="#fff" opacity="0.950" />
          <ellipse cx="480" cy="945" rx="130" ry="36" fill="#ececec" opacity="0.900" />
          <ellipse cx="680" cy="640" rx="70" ry="40" fill="#e6e6e6" opacity="0.900" />
          <ellipse cx="1030" cy="850" rx="120" ry="30" fill="#eeeeee" opacity="0.900" />
          <ellipse cx="700" cy="850" rx="150" ry="26" fill="#ececec" opacity="0.900" />
          <ellipse cx="1080" cy="740" rx="60" ry="44" fill="#e4e4e4" opacity="0.800" />
          <ellipse cx="620" cy="900" rx="60" ry="30" fill="#e8e8e8" opacity="0.800" />
        </g>
        <rect x="300" y="500" width="960" height="560" filter="url(#mottle)" opacity="0.280" />
        <rect x="300" y="560" width="960" height="480" filter="url(#speckle)" opacity="0.400" />
        <g filter="url(#tone)">
          <Blobs items={DARK} />
          <path d="M320 1000L420 1018 520 1008 590 990 620 950 680 975 640 1080 500 1070 320 1040z" fill="#050505" opacity="0.800" />
        </g>
        <g filter="url(#clump)">
          <Blobs items={CLUMPS} />
          <path d="M330 968l60 18-6 22-60-14zM420 1014l90 0 70-16 35-24 5-34 30 40-40 60-50 30-50-20-100-14z" fill="#000" opacity="0.950" />
        </g>
        <path d="M775 870l50 60 40 65M830 870l50 60M460 990l18-60" stroke="#8a8a8a" strokeWidth="5" fill="none" opacity="0.500" />
      </g>
    </g>
  </svg>
);

/* ---------- tree data ---------- */
type Row = [number, boolean, "home" | "conn" | "left" | "folder" | "raster", string];
const TREE: Row[] = [
  [0, true, "home", "Home - Bw_ch\\Documents"],
  [0, false, "conn", "Folder Connections"],
  [1, true, "left", "E:\\bw_ch\\Desktop"],
  [1, false, "left", "F:\\Data"],
  [2, false, "folder", "Program"],
  [3, true, "folder", "17"],
  [3, true, "folder", "learning"],
  [3, true, "folder", "Water bloom extraction algori"],
  [3, false, "folder", "zhenghou"],
  [4, false, "folder", "data"],
  [5, true, "folder", "20160831"],
  [5, false, "folder", "20170615"],
  [6, true, "folder", "LC08_L1TP_124036_2"],
  [6, false, "folder", "lst"],
  [7, true, "raster", "cliped"],
  [7, true, "raster", "gee.tif"],
  [7, true, "raster", "landsat8_lst_singl"],
  [7, true, "raster", "reclass"],
  [6, true, "folder", "raw"],
  [6, true, "raster", "cliped.tif"],
  [6, true, "raster", "gee_2017.tif"],
  [5, true, "folder", "2018"],
  [5, true, "folder", "410100"],
  [5, true, "raster", "l8lst_2017.tif"],
  [5, true, "raster", "l8lst_20170615.tif"],
  [5, true, "raster", "l8lst_20170615_2.tif"],
  [4, true, "folder", "thesis"],
];
const INDENT = ["pl-[8.5px]", "pl-[32.3px]", "pl-[56.1px]", "pl-[79.9px]", "pl-[103.7px]", "pl-[127.5px]", "pl-[151.3px]", "pl-[175.1px]"];
const TRACK = ["tracking-[0.25px]", "tracking-[0.25px]", "tracking-[0.45px]", "tracking-[0.4px]", "tracking-[0.3px]", "tracking-[0.03px]", "tracking-[0.06px]", "tracking-[0.12px]"];

const MENU: [string, string][] = [
  ["File", "w-[43px]"],
  ["Edit", "w-[48px]"],
  ["View", "w-[54px]"],
  ["Bookmarks", "w-[103px]"],
  ["Insert", "w-[61px]"],
  ["Selection", "w-[85px]"],
  ["Geoprocessing", "w-[130px]"],
  ["Customize", "w-[95px]"],
  ["Windows", "w-[86px]"],
  ["Help", "w-[50px]"],
];

const Legend = ({ high, low, box }: { high: string; low: string; box: string }) => (
  <>
    <div className="flex h-[25px] items-center pl-[103px] tracking-[0.2px]">Value</div>
    <div className="relative flex h-[100px] items-start pl-[74px]">
      <div className="h-[50px] w-[17px] bg-gradient-to-b from-[#f5f5f5] to-black" />
      <div className="flex flex-col pl-[5.500px] tracking-[0.3px]">
        <div className="flex h-[50px] items-start leading-[17px]">{high}</div>
        <div className="leading-[17px]">{low}</div>
      </div>
      <div className={box} />
    </div>
  </>
);

const PanelHead = ({ title }: { title: string }) => (
  <div className="flex h-[27px] shrink-0 items-center bg-gradient-to-r from-[#bdcbda] to-[#d6e3f1] pl-[5px] pr-[5px] text-[15.5px] tracking-[0.1px]">
    <span className="flex-1 pt-[2px]">{title}</span>
    <Pin />
    <div className="w-[9px]" />
    <CloseX />
  </div>
);

export default function App() {
  return (
    <div className="flex h-[855px] w-[1592px] flex-col overflow-hidden border border-[#4a4d52] bg-[#f0f0f0] font-['Open_Sans','Noto_Sans','Noto_Sans_CJK_SC',sans-serif] text-[14.5px] whitespace-nowrap text-[#222]">
      <Defs />
      {/* title bar */}
      <div className="flex h-[38px] shrink-0 items-center bg-white pl-[10px] text-black">
        <Ico>
          <circle cx="9.500" cy="9.500" r="9.500" fill="#1c5b86" />
          <path d="M1 13c3-1 4 3 8 6-4 0-7-3-8-6zM12 .5c4 1 6 4 6.500 7L15 6z" fill="#2f7d54" />
          <circle cx="10" cy="8.500" r="5.800" fill="#8fd3ee" stroke="#e4eaee" strokeWidth="1.500" />
          <path d="M7 9l2-3.500 3 .5 1 3-2.500 2.500z" fill="#d6eef2" />
          <path d="M14 13l5 6" stroke="#a0583a" strokeWidth="2.600" />
        </Ico>
        <span className="flex-1 pl-[5px] text-[15.5px] tracking-[0.4px]">
          <span className="text-[15px] tracking-normal">无标题</span> - ArcMap
        </span>
        <svg viewBox="0 0 130 14" className="mr-[23px] h-[14px] w-[130px]" fill="none" stroke="#000">
          <path d="M0 6.500h12M118 .8l11.500 11.500M129.500 .8L118 12.300" strokeWidth="1.100" />
          <rect x="58.500" y="1.500" width="11" height="11" strokeWidth="1.100" />
        </svg>
      </div>

      <div className="flex shrink-0 flex-col bg-gradient-to-r from-[#f0f0f0] via-[#f6f6f6] to-[#fafafa]">
        {/* menu */}
        <div className="flex h-[34px] items-center pl-[15px] text-[15px] tracking-[0.25px] text-[#2b2b2b]">
          {MENU.map(([t, w]) => (
            <div key={t} className={`${w} shrink-0`}>
              {t}
            </div>
          ))}
        </div>

        {/* toolbar row 1 */}
        <div className="flex h-[33px] items-start pt-px">
          <div className="flex h-[30px] w-[775px] shrink-0 items-center bg-gradient-to-b from-[#fdfdfd] to-[#f1f1f1] pl-[6px]">
            <Grip />
            <div className="w-[3.500px]" />
            <Btn><NewDoc /></Btn>
            <Btn><Open /></Btn>
            <Btn><Save /></Btn>
            <Btn><Print /></Btn>
            <div className="w-[6.500px]"><Sep /></div>
            <Btn><Cut /></Btn>
            <Btn><Copy /></Btn>
            <Btn><Paste /></Btn>
            <Btn><Del /></Btn>
            <Sep />
            <Btn><Undo /></Btn>
            <Btn><Redo /></Btn>
            <Sep />
            <Btn><AddData /></Btn>
            <Drop />
            <div className="w-px" />
            <Sep />
            <div className="flex h-[25px] w-[184px] shrink-0 items-center border border-[#7a7a7a] bg-white pl-[3px] pr-[4px] font-['DejaVu_Sans_Mono',monospace] text-[12.500px] tracking-[-0.05px] text-[#222]">
              <span className="flex-1">1:2,000,000</span>
              <Chevron dir="d" c="#666" s={1.5} />
            </div>
            <div className="w-[7px]"><Sep /></div>
            <Btn><Editor /></Btn>
            <Sep />
            <Btn><WToc /></Btn>
            <Btn><WCat /></Btn>
            <Btn><WSearch /></Btn>
            <Btn><WBox /></Btn>
            <Btn><WPy /></Btn>
            <div className="w-[7px]"><Sep /></div>
            <Btn><Model /></Btn>
            <div className="flex-1" />
            <Overflow />
          </div>
          <div className="ml-[37px] flex h-[30px] w-[479px] shrink-0 items-center bg-gradient-to-b from-[#fdfdfd] to-[#f3f3f3] pl-[2px]">
            <Grip />
            <div className="w-[2.500px]" />
            <Btn><GLens plus /></Btn>
            <Btn><GLens /></Btn>
            <Btn><GHand /></Btn>
            <Btn>
              <GPage>
                <path d="M10 3.500l3 3H7zM10 17l3-3H7zM3 10.200l3-3v6zM17 10.200l-3-3v6z" fill="#a0a0a0" />
              </GPage>
            </Btn>
            <Btn>
              <GPage>
                <path d="M5.500 8v7M14.500 8v7M10 9v1.500M10 12.500v1.500" stroke="#a0a0a0" strokeWidth="1.700" />
              </GPage>
            </Btn>
            <Sep />
            <Btn>
              <GPage>
                <g transform="translate(2.500 3) scale(.75)"><Arrows c="#9a9a9a" /></g>
              </GPage>
            </Btn>
            <Btn>
              <GPage>
                <g transform="translate(2.500 3) scale(.75)"><Arrows out c="#9a9a9a" /></g>
              </GPage>
            </Btn>
            <div className="w-[7px]"><Sep /></div>
            <Btn>
              <GPage>
                <path d="M0 11l6.500-6v3.500H15v5H6.500V17z" fill="#a6a6a6" />
              </GPage>
            </Btn>
            <Btn>
              <GPage>
                <path d="M17 11l-6.500-6v3.500H1v5h9.500V17z" fill="#a6a6a6" />
              </GPage>
            </Btn>
            <div className="flex h-[25px] w-[75px] shrink-0 items-center border border-[#cfcfcf] bg-white pl-[2px] pr-[3px] font-['DejaVu_Sans_Mono',monospace] text-[12.500px] text-[#6d6d6d]">
              <span className="mr-[6px] w-[48px] bg-[#f0f0f0] leading-[18px]">100%</span>
              <Chevron dir="d" c="#bbb" s={1.500} />
            </div>
            <div className="w-[7px]"><Sep /></div>
            <div className="mx-px flex h-[27px] w-[27px] shrink-0 items-center justify-center border border-[#a9bccb] bg-[#dfe8f0]">
              <GPage>
                <path d="M5 6.500h10v8H5z" stroke={G} />
                <path d="M7 10.500h6" stroke="#999" strokeWidth="1.400" />
              </GPage>
            </div>
            <Btn>
              <GPage>
                <path d="M4 6h12M4 9h12M4 12h12M4 15h12" stroke="#b0b0b0" strokeWidth="1.300" strokeDasharray="1.500 1.500" />
                <path d="M6 14l7-7" stroke="#aaa" strokeWidth="2" />
              </GPage>
            </Btn>
            <Btn><Swap /></Btn>
            <Btn><Pages /></Btn>
            <div className="flex-1" />
            <Overflow />
          </div>
        </div>

        {/* toolbar row 2 */}
        <div className="flex h-[32px] items-start">
          <div className="flex h-[31px] w-[660px] shrink-0 items-center bg-gradient-to-b from-[#fdfdfd] to-[#f1f1f1] pl-[6px]">
            <Grip />
            <div className="w-[2px]" />
            <Btn><Lens plus /></Btn>
            <Btn><Lens /></Btn>
            <Btn on><Hand /></Btn>
            <div className="w-px" />
            <Btn><Ico><Globe /></Ico></Btn>
            <Sep />
            <Btn><Ico><Arrows /></Ico></Btn>
            <Btn><Ico><Arrows out /></Ico></Btn>
            <Sep />
            <Btn><ArrowLR fill="#2d5fc0" stroke="#1b4288" /></Btn>
            <Btn><ArrowLR right fill="#c9c9c9" stroke="#bababa" /></Btn>
            <Sep />
            <Btn><SelFeat /></Btn>
            <Drop />
            <div className="w-[3px]" />
            <Btn><ClearSel /></Btn>
            <div className="w-[6.500px]"><Sep /></div>
            <Btn><Cursor /></Btn>
            <div className="w-[6.500px]"><Sep /></div>
            <Btn><Info /></Btn>
            <Btn><Bolt /></Btn>
            <Btn><Popup /></Btn>
            <Sep />
            <Btn><Measure /></Btn>
            <div className="w-[7px]"><Sep /></div>
            <Btn><Binoc /></Btn>
            <Btn><Route /></Btn>
            <Btn><GoXY /></Btn>
            <div className="w-[7px]"><Sep /></div>
            <Btn><TimeS /></Btn>
            <div className="w-[7px]"><Sep /></div>
            <Btn><Viewer /></Btn>
            <div className="flex-1" />
            <Overflow />
          </div>
          <div className="ml-[38px] flex h-[31px] w-[503px] shrink-0 items-center bg-gradient-to-b from-[#fdfdfd] to-[#f3f3f3] pl-[2px]">
            <Grip />
            <div className="ml-px flex h-[23px] w-[223px] shrink-0 items-center border-2 border-[#808080] border-r-[#b8b8b8] border-b-[#b8b8b8] bg-white">
              <RasterDia />
              <span className="w-[179px] shrink-0 pl-[4px] text-[15.5px] tracking-[-0.1px] text-[#222]">landsat8_lst_singlewindo</span>
              <div className="z-10 flex h-[19px] w-[20px] shrink-0 items-center justify-center border border-[#9a9a9a] bg-[#efefef]">
                <svg viewBox="0 0 10 6" className="h-[6px] w-[10px]"><path d="M0 .5h10L5 5.700z" /></svg>
              </div>
            </div>
            <div className="w-px" />
            <Btn><Contrast /></Btn>
            <Btn><Sun /></Btn>
            <Btn><Transp /></Btn>
            <Btn><GDia /></Btn>
            <Sep />
            <Btn><SwipeI /></Btn>
            <Sep />
            <Btn><Flick /></Btn>
            <div className="flex h-[25px] w-[75px] shrink-0 items-center border-2 border-[#7f7f7f] border-r-[#c4c4c4] border-b-[#c4c4c4] bg-white font-['DejaVu_Sans_Mono',monospace] text-[13px] text-[#222]">
              <span className="flex-1">500</span>
              <div className="flex h-[21px] w-[19px] flex-col gap-px">
                <div className="flex flex-1 items-center justify-center border border-[#b0b0b0] bg-[#f0f0f0]">
                  <svg viewBox="0 0 8 5" className="h-[4px] w-[8px]"><path d="M4 0l4 4.500H0z" /></svg>
                </div>
                <div className="flex flex-1 items-center justify-center border border-[#b0b0b0] bg-[#f0f0f0]">
                  <svg viewBox="0 0 8 5" className="h-[4px] w-[8px]"><path d="M4 4.500L0 0h8z" /></svg>
                </div>
              </div>
            </div>
            <div className="flex-1" />
            <Overflow />
          </div>
        </div>
      </div>

      {/* main */}
      <div className="flex h-[690px] shrink-0">
        {/* contents panel */}
        <div className="flex w-[312px] shrink-0 flex-col">
          <PanelHead title="Table Of Contents" />
          <div className="flex h-[33px] shrink-0 items-center bg-gradient-to-b from-[#fafafa] to-[#efefef] pl-[5px]">
            <Btn on><TocDraw /></Btn>
            <Btn><TocSrc /></Btn>
            <Btn><TocVis /></Btn>
            <Btn><TocSel /></Btn>
            <Sep />
            <Btn><OptList /></Btn>
          </div>
          <div className="flex h-[629px] flex-col border border-[#828790] bg-white text-[15px] tracking-[0.05px]">
            <div className="flex flex-1 flex-col overflow-hidden pt-px">
              <div className="flex h-[25px] items-center pl-[10.500px]">
                <Expander />
                <div className="w-[8px]" />
                <Ico>
                  {[14, 10, 6, 2].map((y) => (
                    <path key={y} d={`M1 ${y + 4}L5 ${y - 1}h14l-3.500 5z`} fill="url(#tan)" stroke="#b9853a" strokeWidth="0.900" />
                  ))}
                </Ico>
                <span className="pl-[6px] text-[15.5px] font-bold tracking-[-0.300px] text-black">Layers</span>
              </div>
              <div className="flex h-[25px] items-center pl-[34px]">
                <Expander />
                <div className="w-[10px]" />
                <Check />
                <span className="pl-[10px] tracking-[0.18px]">410100_EPSG32649</span>
              </div>
              <div className="flex h-[25px] items-center pl-[74px]">
                <div className="h-[14px] w-[19px] border border-[#6e7b8a] bg-[#bfdbfb]" />
              </div>
              <div className="flex h-[25px] items-center pl-[34px]">
                <Expander />
                <div className="w-[10px]" />
                <Check on />
                <span className="ml-[7.500px] flex h-[25px] w-[49px] items-center bg-[#0078d7] pl-[2.500px] tracking-[0.3px] text-white">cliped</span>
              </div>
              <Legend high="High : 321.342" low="Low : 241.091" box="absolute top-[43px] left-[85px] h-[28px] w-[121px] border-3 border-[#ed1c24]" />
              <div className="flex h-[25px] items-center pl-[34px]">
                <Expander />
                <div className="w-[10px]" />
                <Check on />
                <span className="pl-[10px] tracking-[0.1px]">landsat8_lst_singlewindow_1.dat</span>
              </div>
              <Legend high="High : 315.996" low="Low : 89.7954" box="absolute top-[44px] left-[87px] h-[31px] w-[128px] border-3 border-[#ed1c24]" />
            </div>
            <div className="mb-[3px] flex h-[19px] shrink-0 items-center bg-[#f0f0f0] pr-[7px] pl-[6px]">
              <Chevron dir="l" s={2.600} />
              <div className="ml-[5px] h-[19px] w-[260px] bg-[#cdcdcd]" />
              <div className="flex-1" />
              <Chevron dir="r" s={2.600} />
            </div>
          </div>
        </div>

        {/* map */}
        <div className="ml-[6px] flex h-[689px] w-[865px] shrink-0 flex-col border-t-2 border-l-2 border-[#6f6f6f] bg-[#f0f0f0]">
          <div className="flex h-[664px] shrink-0">
            <div className="flex w-[840px] shrink-0 bg-[#fdfefe] pt-[68px] pl-[157px]">
              <Scene />
            </div>
            <div className="ml-px flex w-[18px] flex-col items-center">
              <div className="flex h-[20px] items-center pt-[2px]"><Chevron dir="u" s={2} /></div>
              <div className="h-[621px] w-[18px] bg-[#cdcdcd]" />
              <div className="flex h-[26px] items-center pt-px"><Chevron dir="d" s={2} /></div>
            </div>
          </div>
          <div className="mt-[2px] flex h-[18px] items-center">
            <div className="flex h-[18px] w-[21px] shrink-0 items-center justify-center border border-[#92c3ee] bg-[#c3dff7]">
              <svg viewBox="0 0 12 12" className="h-[11px] w-[11px]">
                <rect x="0.800" y="0.800" width="10.400" height="10.400" fill="#b9dd7a" stroke="#222" strokeWidth="1.300" />
                <path d="M2 10L10 2v8z" fill="#e9f3c9" />
                <path d="M2 10l8-8" stroke="#557" />
              </svg>
            </div>
            <svg viewBox="0 0 12 12" className="ml-[5px] h-[12px] w-[12px]">
              <path d="M2 .8h5.500L10.300 3.500v7.700H2z" fill="#fff" stroke="#222" strokeWidth="1.400" />
              <path d="M4 5h4M4 8h4" stroke="#2b5f93" strokeWidth="1.300" />
            </svg>
            <div className="ml-[7px] h-[16px] w-px bg-[#888]" />
            <svg viewBox="0 0 12 12" className="ml-[11px] h-[12px] w-[12px]" fill="none">
              <path d="M1.500 5A4.500 4.500 0 019.500 3M10.500 7A4.500 4.500 0 012.500 9" stroke="#1d4f91" strokeWidth="1.700" />
              <path d="M11.500 0v4.500H7zM.5 12V7.500H5z" fill="#1d4f91" />
            </svg>
            <svg viewBox="0 0 8 8" className="ml-[11px] h-[8px] w-[8px]">
              <path d="M1.500 0v8M6.500 0v8" stroke="#1f5fd0" strokeWidth="2.400" />
            </svg>
            <div className="w-[12px]" />
            <Chevron dir="l" s={2.600} />
            <div className="ml-[4px] h-[18px] w-[701px] bg-[#cdcdcd]" />
            <div className="w-[5px]" />
            <Chevron dir="r" s={2.600} />
          </div>
        </div>

        {/* catalog */}
        <div className="ml-[5px] flex w-[374px] shrink-0 flex-col">
          <PanelHead title="Catalog" />
          <div className="flex h-[30px] shrink-0 items-center bg-white pt-[2px] pl-[4px]">
            <Btn><ArrowLR fill="#f0d23c" stroke="#6f5f14" /></Btn>
            <div className="w-[4px]" />
            <Drop c="#222" />
            <div className="w-[3px]" />
            <Btn><ArrowLR right fill="#d6d6d6" stroke="#6f6f6f" /></Btn>
            <div className="w-[3px]" />
            <Btn>
              <Ico>
                <path d="M8.500 2L15 8.500h-4V13h8v5H5.500V8.500H2z" fill="#eccf3f" stroke="#6f5f14" strokeWidth="1.200" />
              </Ico>
            </Btn>
            <div className="w-px" />
            <Btn>
              <Ico>
                <path d="M3 10v8.500h14V10" fill="#f3e07a" stroke="#6f5714" strokeWidth="1.200" />
                <path d="M.5 10.500L4 7V2.500h2.500V5L10 1l9.500 9.500z" fill="#dcb93a" stroke="#6f5714" strokeWidth="1.100" />
                <path d="M6 11.500h3.500V18H6zM12 11.500h3V15h-3z" fill="#8b6a16" />
              </Ico>
            </Btn>
            <div className="w-[2px]" />
            <Btn>
              <Ico>
                <path d="M1.500 3v12c0 3 14 3 14 0V3z" fill="#aebfd2" stroke="#8394a8" />
                <ellipse cx="8.500" cy="3.200" rx="7" ry="2.400" fill="#e9f0f7" stroke="#8394a8" />
                <path d="M7.500 13.500L13.500 8l6 5.500h-1.500V19H9v-5.500z" fill="#f0d86a" stroke="#7b6118" />
                <path d="M12.500 19v-4h2.500v4z" fill="#6f5714" />
              </Ico>
            </Btn>
            <div className="mx-[3px] h-[22px] w-px shrink-0 bg-[#999]" />
            <div className="w-[5px]" />
            <Btn>
              <Ico>
                <path d="M1 2h19" stroke="#444" strokeWidth="1.800" strokeDasharray="5 1" />
                {[5.500, 9, 12.500, 16, 19].map((y) => (
                  <path key={y} d={`M0 ${y}h20`} stroke="#555" strokeWidth="1.300" strokeDasharray="3.500 1.500" />
                ))}
              </Ico>
            </Btn>
            <div className="w-[5px]" />
            <Drop c="#777" />
            <div className="w-[5px]" />
            <div className="mx-[3px] h-[22px] w-px shrink-0 bg-[#999]" />
            <div className="w-[4px]" />
            <Btn>
              <Ico>
                <path d="M.5 17.500V6h6L8 8h11v9.500z" fill="url(#gold)" stroke="#8b7422" strokeWidth="1.200" />
                <path d="M0 8.500l5 4-5 4z" fill="#2a2409" />
                <path d="M14.500 1v8.500M10.200 5.300h8.600" stroke="#111" strokeWidth="2.400" />
              </Ico>
            </Btn>
            <div className="mx-[3px] h-[22px] w-px shrink-0 bg-[#999]" />
            <div className="w-[4px]" />
            <Btn>
              <Ico>
                <path d="M4 6v10.500h6M4 9h6" stroke="#666" strokeWidth="1.300" />
                <path d="M1 1h5.500v5H1zM9 5.500h5v5H9zM9 13.500h5v5H9z" fill="#e8cd54" stroke="#6f5f14" />
                <path d="M16 9h4M16 17h4" stroke="#3a87b8" strokeWidth="1.700" />
              </Ico>
            </Btn>
            <div className="mx-[3px] h-[22px] w-px shrink-0 bg-[#999]" />
            <div className="w-[3px]" />
            <Btn><OptList /></Btn>
          </div>
          <div className="flex h-[33px] shrink-0 items-center pt-px pl-[2px] text-[14px] tracking-[-0.400px]">
            <div className="w-[66px]">Location:</div>
            <div className="flex h-[27px] w-[303px] items-center border border-[#7a7a7a] bg-white pl-[3px] pr-[4px]">
              <Hammer />
              <span className="flex-1 pl-[5px]">Extract by Mask</span>
              <Chevron dir="d" c="#666" s={1.500} />
            </div>
          </div>
          <div className="flex h-[593px] w-[370px] shrink-0 flex-col border-t-2 border-l-2 border-[#6f6f6f]">
            <div className="flex h-[570px] shrink-0">
              <div className="flex w-[346px] shrink-0 flex-col overflow-hidden bg-white text-[15px]">
                {TREE.map(([lvl, plus, kind, label]) => (
                  <div key={`${lvl}${label}`} className={`flex h-[21.250px] shrink-0 items-center ${INDENT[lvl]}`}>
                    <Expander plus={plus} />
                    <div className="w-[8.500px] shrink-0" />
                    {kind === "raster" ? <Raster /> : <Folder mark={kind === "folder" ? undefined : kind} />}
                    <span className={`pl-[5.5px] ${TRACK[lvl]}`}>{label}</span>
                  </div>
                ))}
              </div>
              <div className="flex w-[20px] flex-col items-center bg-[#f0f0f0]">
                <div className="flex h-[21px] items-center"><Chevron dir="u" s={2.400} /></div>
                <div className="h-[153px] w-[19px] bg-[#cdcdcd]" />
                <div className="flex-1" />
                <div className="flex h-[24px] items-center"><Chevron dir="d" s={2.400} /></div>
              </div>
            </div>
            <div className="flex h-[19px] items-center bg-[#f0f0f0] pl-[5px]">
              <Chevron dir="l" s={2.600} />
              <div className="ml-[4px] h-[19px] w-[196px] bg-[#cdcdcd]" />
              <div className="w-[111px]" />
              <Chevron dir="r" s={2.600} />
            </div>
          </div>
        </div>

        {/* auto-hide tab strip */}
        <div className="flex flex-1 flex-col items-end bg-[#fafafa] pt-[2px]">
          <div className="flex h-[88px] w-[25px] flex-col items-center rounded-l-[4px] border border-r-0 border-[#9a9a9a] bg-[#f3f3f3] pt-[5px]">
            <WinFrame>
              <g transform="translate(2 5) scale(.8)">
                <path d="M6 6l11 11" stroke="#c99868" strokeWidth="4" />
                <path d="M0 9l8-8 5 3-6 7z" fill="#555" />
              </g>
            </WinFrame>
            <span className="mt-[4px] mr-[3px] font-['Liberation_Mono',monospace] text-[12.500px] leading-[14px] text-[#555] [writing-mode:vertical-rl]">Results</span>
          </div>
        </div>
      </div>

      {/* status bar */}
      <div className="flex h-[26px] shrink-0 items-center bg-[#f0f0f0] text-[15px] tracking-[0.28px]">
        <div className="w-[1024px] shrink-0" />
        <div className="h-[22px] w-px bg-[#e6e6e6]" />
        <div className="w-[189px] shrink-0" />
        <span className="flex-1 pt-px whitespace-pre">563029.214  3881626.432 Meters</span>
        <svg viewBox="0 0 12 12" className="mt-[8px] mr-[6px] h-3 w-3">
          <path d="M8.500 0h2v2h-2zM4.500 4h2v2h-2zM8.500 4h2v2h-2zM.5 8h2v2h-2zM4.500 8h2v2h-2zM8.500 8h2v2h-2z" fill="#b9b9b9" />
        </svg>
      </div>
    </div>
  );
}
